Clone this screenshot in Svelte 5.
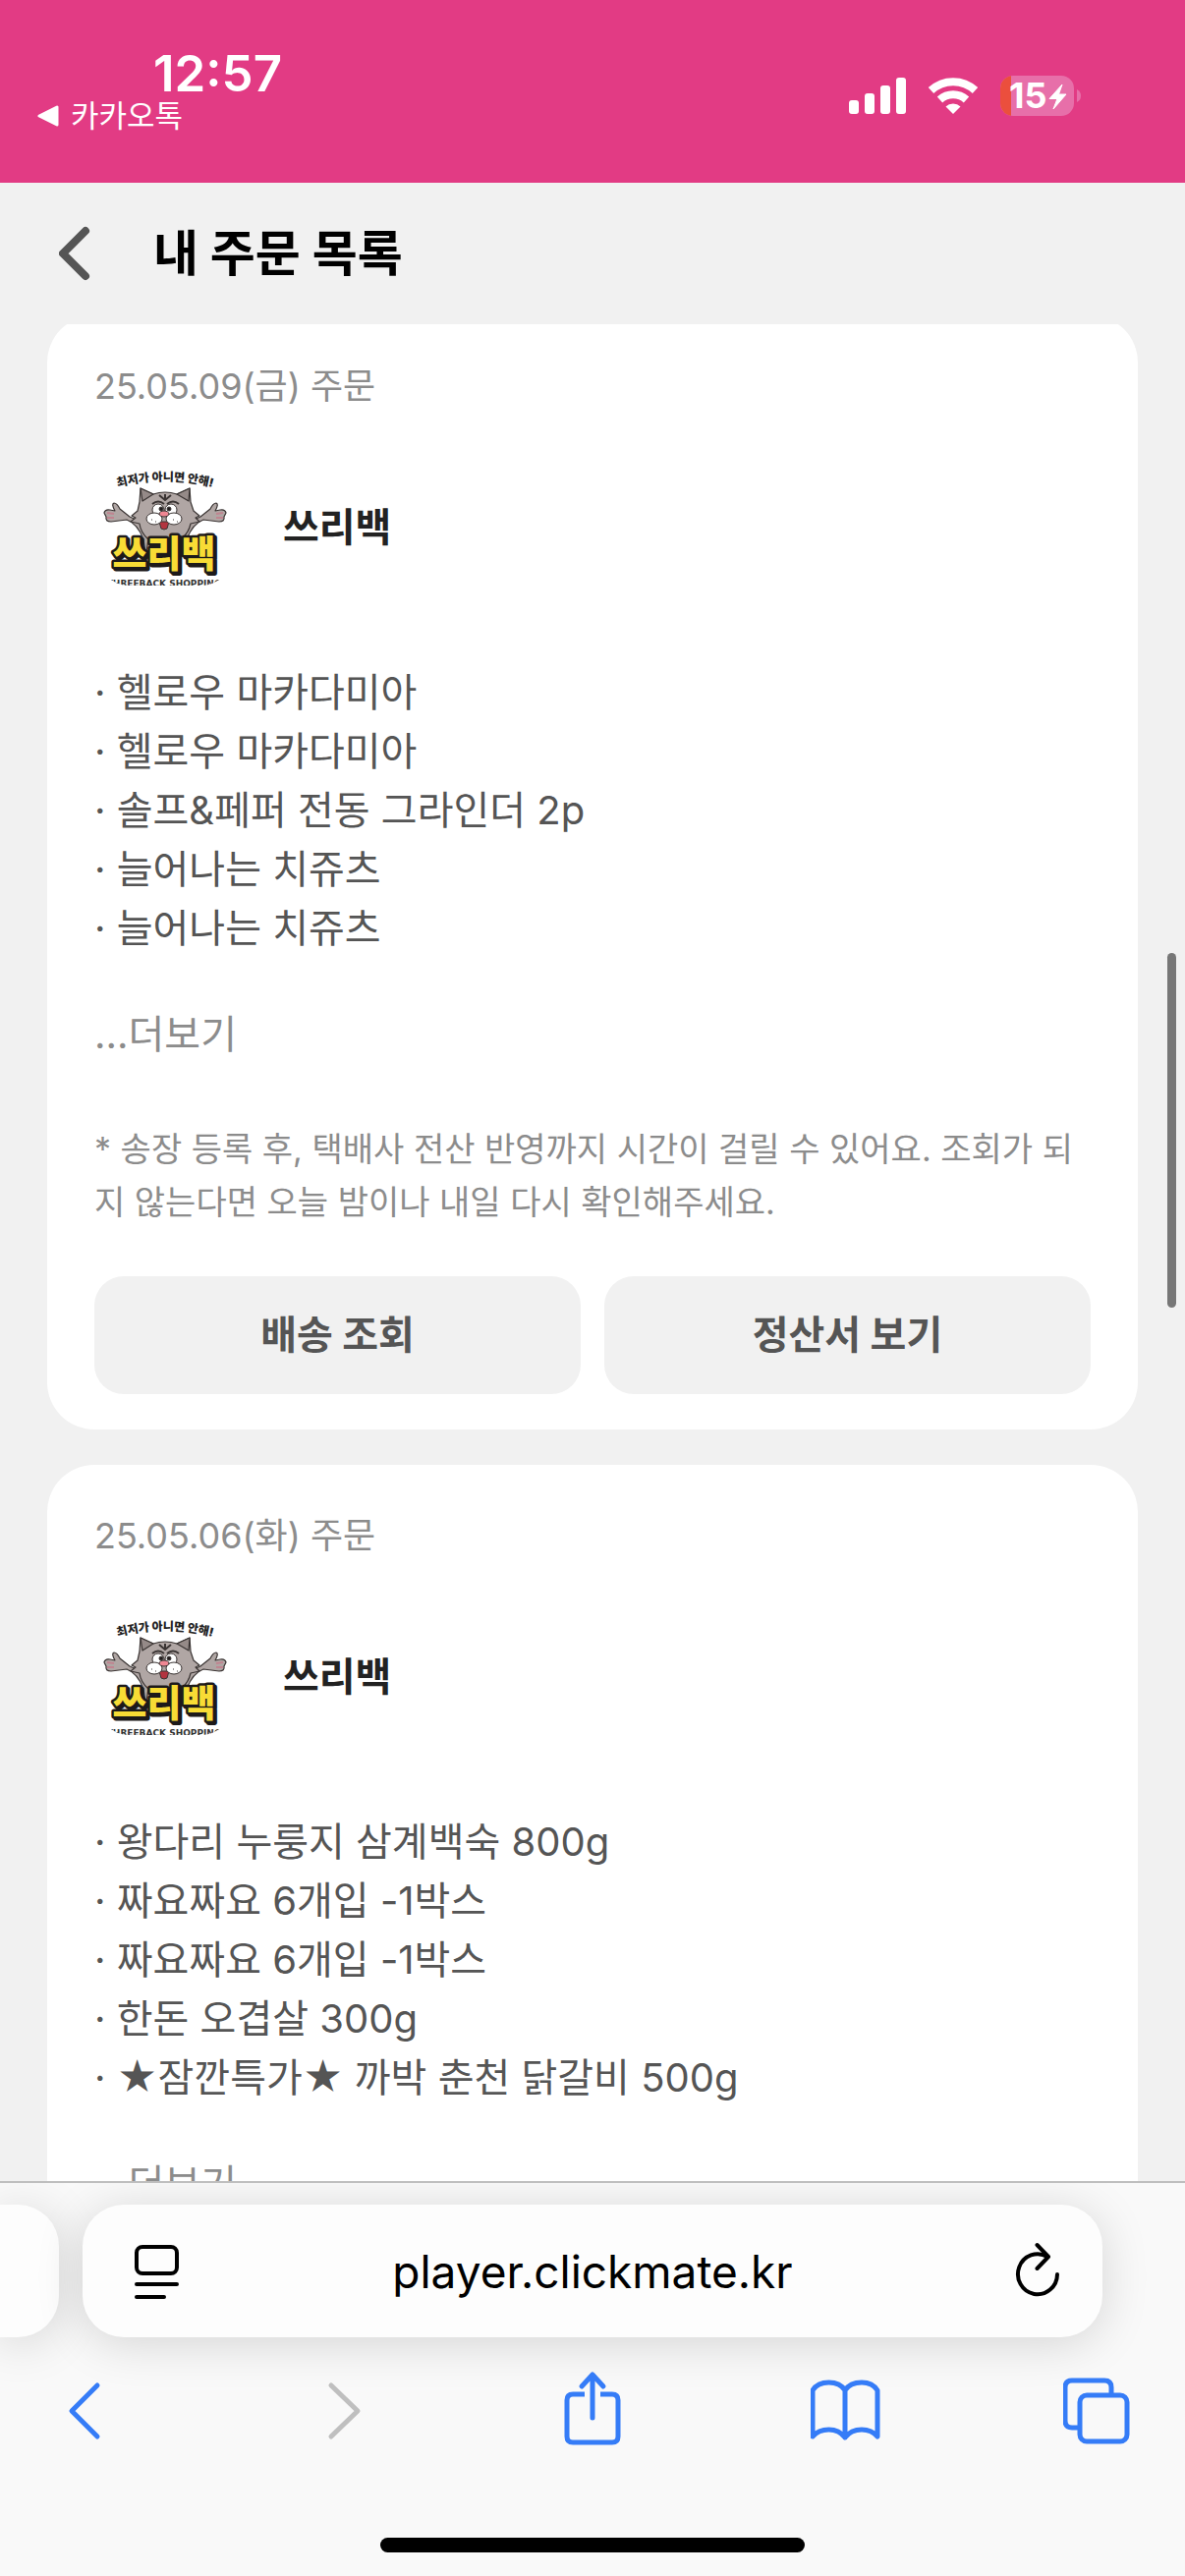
<script>
  const note =
    '* 송장 등록 후, 택배사 전산 반영까지 시간이 걸릴 수 있어요. 조회가 되지 않는다면 오늘 밤이나 내일 다시 확인해주세요.';

  const orders = [
    {
      date: '25.05.09(금) 주문',
      shop: '쓰리백',
      shipped: true,
      items: [
        '헬로우 마카다미아',
        '헬로우 마카다미아',
        '솔프&페퍼 전동 그라인더 2p',
        '늘어나는 치쥬츠',
        '늘어나는 치쥬츠',
      ],
    },
    {
      date: '25.05.06(화) 주문',
      shop: '쓰리백',
      shipped: false,
      items: [
        '왕다리 누룽지 삼계백숙 800g',
        '짜요짜요 6개입 -1박스',
        '짜요짜요 6개입 -1박스',
        '한돈 오겹살 300g',
        '★잠깐특가★ 까박 춘천 닭갈비 500g',
      ],
    },
  ];
</script>

{#snippet shopLogo(id)}
  <svg class="logo" viewBox="0 0 144 144" role="img" aria-label="쓰리백 로고">
    <defs>
      <path id="arc-{id}" d="M20 32 Q72 17 124 32" />
      <clipPath id="clip-{id}"><rect x="2" y="0" width="140" height="131" rx="34" /></clipPath>
    </defs>
    <text class="logo-slogan" text-anchor="middle">
      <textPath href="#arc-{id}" startOffset="50%">최저가 아니면 안해!</textPath>
    </text>
    <g fill="#b0a6a4" stroke="#3a3433" stroke-width="1.2" stroke-linejoin="round">
      <path d="M50 84 Q44 68 33 64 L17 66 Q11 66 12 61 L10 57 Q11 53 16 54 L21 55 Q17 48 20 47 Q23 47 26 53 L36 61 Q50 66 60 80 L60 98 L52 98 Z" />
      <path d="M94 84 Q100 68 111 64 L127 66 Q133 66 132 61 L134 57 Q133 53 128 54 L123 55 Q127 48 124 47 Q121 47 118 53 L108 61 Q94 66 84 80 L84 98 L92 98 Z" />
      <path d="M47 32 L60 38 Q72 34 84 38 L97 32 L98 46 L101 55 L107 60 L103 62 L107 66 L98 68 Q96 77 90 82 L92 96 L53 96 L55 84 Q47 77 46 68 L37 66 L42 62 L38 60 L44 55 L46 46 Z" />
      <path d="M47 32 L60 38 L49 45 Z M97 32 L84 38 L96 45 Z" fill="#958a88" />
      <path d="M66 39 L72 44 L78 39 M72 38 V43 M59 48 Q65 43 71 48 M74 48 Q80 43 86 48" fill="none" stroke-width="2" />
    </g>
    <path d="M13 57 L20 58 M13 62 L20 62 M131 57 L124 58 M131 62 L124 62" stroke="#c08490" stroke-width="2" />
    <g stroke="#3a3433" stroke-width="1">
      <ellipse cx="65" cy="54" rx="6" ry="6" fill="#fff" />
      <ellipse cx="78" cy="54" rx="6" ry="6" fill="#fff" />
      <circle cx="68" cy="53" r="2" fill="#211d1d" />
      <circle cx="76" cy="53" r="2" fill="#211d1d" />
      <path d="M66 66 H76 L74 73 Q71 75 68 73 Z" fill="#b3343f" />
      <ellipse cx="61" cy="63" rx="8" ry="6" fill="#fff" />
      <ellipse cx="81" cy="63" rx="8" ry="6" fill="#fff" />
      <ellipse cx="71" cy="58" rx="5" ry="3" fill="#f08793" />
    </g>
    <path d="M58 64 h1 M62 66 h1 M80 64 h1 M84 66 h1" stroke="#3a3433" stroke-width="1" />
    <text class="logo-word logo-shadow" x="73" y="114" text-anchor="middle" aria-hidden="true">쓰리백</text>
    <text class="logo-word" x="71" y="112" text-anchor="middle">쓰리백</text>
    <g clip-path="url(#clip-{id})">
      <text class="logo-foot" x="71" y="132" text-anchor="middle">THREEBACK SHOPPING</text>
    </g>
  </svg>
{/snippet}

<div class="screen">
  <div class="status">
    <div class="status-left">
      <span class="time">12:57</span>
      <a class="return" href="#kakao">
        <svg width="22" height="22" viewBox="0 0 22 22" aria-hidden="true">
          <path d="M20 2 V20 L2 11 Z" fill="#fff" stroke="#fff" stroke-width="3" stroke-linejoin="round" />
        </svg>
        카카오톡
      </a>
    </div>
    <div class="status-right">
      <svg width="58" height="42" viewBox="0 0 58 42" fill="#fff" role="img" aria-label="신호 세기">
        <rect x="0" y="25" width="10" height="14" rx="3" />
        <rect x="16" y="18" width="10" height="21" rx="3" />
        <rect x="32" y="10" width="10" height="29" rx="3" />
        <rect x="48" y="2" width="10" height="37" rx="3" />
      </svg>
      <svg width="52" height="42" viewBox="0 0 52 42" role="img" aria-label="Wi-Fi">
        <g fill="none" stroke="#fff" stroke-width="8">
          <path d="M3.5 15 A33 33 0 0 1 48.500 15" />
          <path d="M12.500 24.500 A20 20 0 0 1 39.500 24.500" />
        </g>
        <path d="M18.500 31.500 A11 11 0 0 1 33.500 31.500 L26 39 Z" fill="#fff" />
      </svg>
      <svg width="84" height="42" viewBox="0 0 84 42" role="img" aria-label="배터리 15%">
        <defs><clipPath id="battery"><rect x="0" y="0" width="75" height="41" rx="13" /></clipPath></defs>
        <rect width="75" height="41" rx="13" fill="#e76fa9" />
        <rect width="11" height="41" fill="#eb4f3d" clip-path="url(#battery)" />
        <path d="M78 14 Q82 16 82 20.500 Q82 25 78 27 Z" fill="#e76fa9" />
        <text class="battery-text" x="9" y="33">15</text>
        <path d="M63 9 L50 23.500 H58 L54 34 L67 19 H59.500 Z" fill="#fff" stroke="#fff" stroke-linejoin="round" />
      </svg>
    </div>
  </div>

  <header>
    <button class="plain back" aria-label="뒤로">
      <svg width="36" height="60" viewBox="0 0 36 60" aria-hidden="true">
        <path d="M27 7 L4 30 L27 53" fill="none" stroke="#555" stroke-width="8" stroke-linecap="round" stroke-linejoin="round" />
      </svg>
    </button>
    <h1>내 주문 목록</h1>
  </header>

  <main>
    {#each orders as order, index}
      <article>
        <p class="date">{order.date}</p>
        <div class="shop">
          {@render shopLogo(index)}
          <h2>{order.shop}</h2>
        </div>
        <ul>
          {#each order.items as item}
            <li>· {item}</li>
          {/each}
        </ul>
        <button class="plain more">...더보기</button>
        {#if order.shipped}
          <p class="note">{note}</p>
          <div class="actions">
            <button>배송 조회</button>
            <button>정산서 보기</button>
          </div>
        {/if}
      </article>
    {/each}
    <div class="scrollbar"></div>
  </main>

  <footer>
    <div class="tabs">
      <div class="tab previous"></div>
      <div class="tab current">
        <button class="plain" aria-label="페이지 메뉴">
          <svg width="56" height="60" viewBox="-8 0 56 60" fill="none" stroke="#000" stroke-width="4" stroke-linecap="round" aria-hidden="true">
            <rect x="3" y="5" width="41" height="27" rx="6" />
            <path d="M3 43 H44 M3 56 H31" />
          </svg>
        </button>
        <input type="text" aria-label="주소" value="player.clickmate.kr" />
        <button class="plain" aria-label="새로고침">
          <svg width="56" height="60" viewBox="-10 0 56 60" fill="none" stroke="#000" stroke-width="4" stroke-linecap="round" stroke-linejoin="round" aria-hidden="true">
            <path d="M44 33 A20 20.500 0 1 1 34 15" />
            <path d="M23.500 3 L35 15 L23.500 27" />
          </svg>
        </button>
      </div>
      <div class="tab-edge"></div>
    </div>
    <nav>
      <button class="plain" aria-label="이전">
        <svg viewBox="0 0 72 84"><path d="M47 17 L21 43 L47 69" /></svg>
      </button>
      <button class="plain disabled" aria-label="다음">
        <svg viewBox="0 0 72 84"><path d="M27 17 L54 43 L27 69" /></svg>
      </button>
      <button class="plain" aria-label="공유">
        <svg viewBox="0 0 72 84">
          <path d="M28 26 H16 Q10 26 10 32 V69 Q10 75 16 75 H56 Q62 75 62 69 V32 Q62 26 56 26 H44" stroke-linecap="butt" />
          <path d="M36 50 V7 M25 18 L36 6 L47 18" />
        </svg>
      </button>
      <button class="plain" aria-label="책갈피">
        <svg viewBox="0 0 72 84">
          <path d="M35 22 Q30 14 18.500 14 Q7 14 2 22 V69 Q8 62 18.500 62 Q29 62 35 70 Q41 62 52 62 Q62 62 68 69 V22 Q63 14 52 14 Q40 14 35 22 V70" />
        </svg>
      </button>
      <button class="plain" aria-label="탭">
        <svg viewBox="0 0 72 84">
          <rect x="17" y="27" width="48" height="47" rx="7" />
          <path d="M16 60 H9 Q2 60 2 53 V19 Q2 12 9 12 H42 Q49 12 49 19 V26" stroke-linecap="butt" />
        </svg>
      </button>
    </nav>
    <div class="home"></div>
  </footer>
</div>

<style>
  :global(body) {
    margin: 0;
  }

  .screen {
    display: flex;
    flex-direction: column;
    height: 100vh;
    overflow: hidden;
    background: #f1f1f1;
    color: #555;
    font-family: Inter, 'Noto Sans CJK KR', sans-serif;
    font-size: 40px;
    line-height: 60px;
  }

  h1,
  h2,
  p,
  ul {
    margin: 0;
    padding: 0;
  }

  button,
  input {
    font: inherit;
    color: inherit;
    border: 0;
    margin: 0;
    padding: 0;
  }

  .plain {
    background: none;
  }

  svg {
    display: block;
    flex: none;
  }

  .status {
    display: flex;
    justify-content: space-between;
    flex: none;
    box-sizing: border-box;
    height: 186px;
    padding: 48px 104px 0 38px;
    background: #e23b84;
    color: #fff;
  }

  .status-left {
    display: flex;
    flex-direction: column;
  }

  .time {
    padding-left: 118px;
    font-size: 51px;
    font-weight: 600;
    line-height: 54px;
  }

  .return {
    display: flex;
    align-items: center;
    gap: 12px;
    color: inherit;
    font-size: 31px;
    line-height: 32px;
    text-decoration: none;
  }

  .status-right {
    display: flex;
    gap: 22px;
    padding-top: 29px;
  }

  .battery-text {
    fill: #fff;
    font-size: 36px;
    font-weight: 700;
  }

  header {
    position: relative;
    z-index: 1;
    display: flex;
    align-items: center;
    gap: 60px;
    flex: none;
    height: 144px;
    padding-left: 60px;
    background: #f1f1f1;
  }

  h1 {
    color: #000;
    font-size: 50px;
    font-weight: 700;
  }

  main {
    position: relative;
    flex: 1;
    min-height: 0;
    margin-top: -9px;
    padding: 0 48px;
    overflow: hidden;
  }

  article {
    margin-bottom: 36px;
    padding: 48px 48px 36px;
    border-radius: 48px;
    background: #fff;
  }

  .date {
    color: #8c8c8c;
    font-size: 36px;
    line-height: 48px;
  }

  .shop {
    display: flex;
    align-items: center;
    gap: 48px;
    margin: 48px 0 66px;
  }

  h2 {
    color: #222;
    font-size: 40px;
    font-weight: 700;
  }

  .logo {
    width: 144px;
    height: 144px;
  }

  .logo-slogan {
    fill: #222;
    font-size: 12px;
    font-weight: 900;
  }

  .logo-word {
    fill: #f8dc35;
    stroke: #1d1a1a;
    stroke-width: 5px;
    stroke-linejoin: round;
    paint-order: stroke;
    font-size: 38px;
    font-weight: 900;
  }

  .logo-shadow {
    fill: #1d1a1a;
  }

  .logo-foot {
    fill: #333;
    font-family: 'DejaVu Sans', sans-serif;
    font-size: 9px;
    font-weight: 700;
  }

  ul {
    list-style: none;
  }

  .more {
    display: block;
    margin: 48px 0 60px;
    color: #8c8c8c;
  }

  .note {
    color: #8c8c8c;
    font-size: 34px;
    line-height: 54px;
  }

  .actions {
    display: grid;
    grid-template-columns: 1fr 1fr;
    gap: 24px;
    margin-top: 48px;
  }

  .actions button {
    height: 120px;
    border-radius: 30px;
    background: #f1f1f1;
    font-weight: 700;
  }

  .scrollbar {
    position: absolute;
    top: 649px;
    right: 9px;
    width: 9px;
    height: 361px;
    border-radius: 5px;
    background: #777;
  }

  footer {
    flex: none;
    overflow: hidden;
    border-top: 2px solid #bebebe;
    background: #f9f9f9;
  }

  .tabs {
    display: flex;
    gap: 24px;
    padding-top: 22px;
  }

  .tab {
    height: 135px;
    background: #fdfdfd;
    box-shadow: 0 6px 48px rgba(0, 0, 0, 0.15);
  }

  .previous {
    width: 60px;
    border-radius: 0 42px 42px 0;
  }

  .current {
    display: flex;
    align-items: center;
    flex: 1;
    min-width: 0;
    box-sizing: border-box;
    padding: 0 44px;
    border-radius: 42px;
  }

  .tab-edge {
    width: 60px;
  }

  input {
    flex: 1;
    min-width: 0;
    background: none;
    color: #000;
    font-size: 46px;
    text-align: center;
  }

  nav {
    display: flex;
    justify-content: space-between;
    padding: 32px 52px 0;
  }

  nav svg {
    width: 72px;
    height: 84px;
    fill: none;
    stroke: #357cf7;
    stroke-width: 5px;
    stroke-linecap: round;
    stroke-linejoin: round;
  }

  .disabled svg {
    stroke: #bfbfbf;
  }

  .home {
    width: 432px;
    height: 15px;
    margin: 88px auto 24px;
    border-radius: 8px;
    background: #000;
  }
</style>
